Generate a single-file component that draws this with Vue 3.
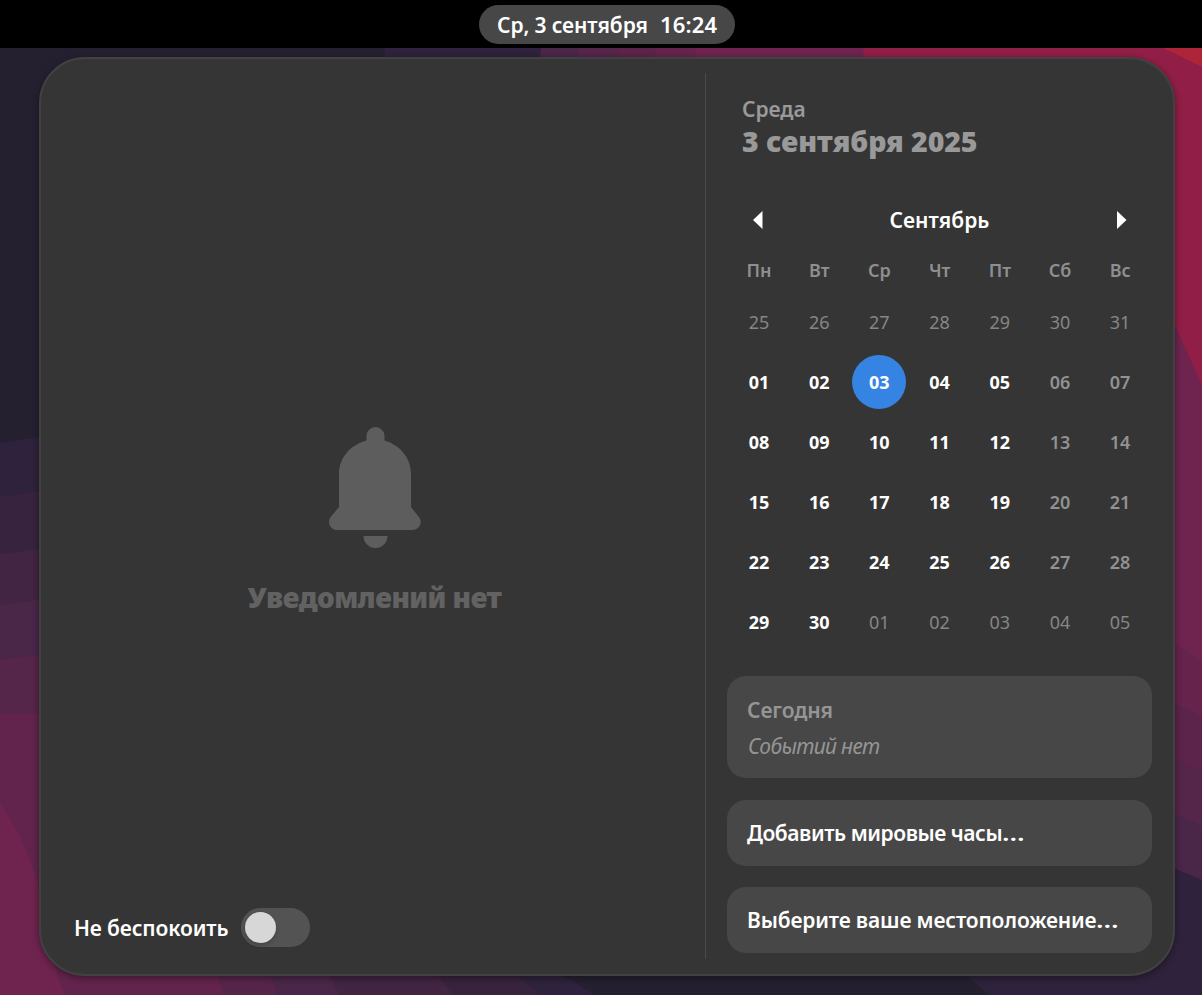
<script setup>
const weekdays = ['Пн', 'Вт', 'Ср', 'Чт', 'Пт', 'Сб', 'Вс']
const pad = (n) => String(n).padStart(2, '0')
const days = Array.from({ length: 42 }, (_, i) => {
  const n = i - 6
  const other = n < 1 || n > 30
  return {
    id: i,
    label: pad(n < 1 ? n + 31 : n > 30 ? n - 30 : n),
    other,
    weekend: !other && i % 7 > 4,
    today: n === 3,
  }
})
</script>

<template>
  <div class="desktop">
    <svg class="wallpaper" viewBox="0 0 1202 995" aria-hidden="true">
      <rect width="1202" height="995" fill="#252030" />
      <path d="M385 48H1202V995H989L966 975L384 57Z" fill="#2f223c" />
      <path d="M0 443L39 437L563 975L595 995H0Z" fill="#2f223c" />
      <path d="M0 497L39 491L517 975L540 995H0Z" fill="#38233e" />
      <path d="M0 554L39 549L437 975L453 995H0Z" fill="#422443" />
      <path d="M0 605L39 600L329 975L339 995H0Z" fill="#4a2649" />
      <path d="M0 660L39 655L270 975L278 995H0Z" fill="#55254a" />
      <path d="M0 714H39L217 975L224 995H0Z" fill="#62244c" />
      <path d="M0 804Q24 835 39 888L57 975L65 995H0Z" fill="#6e244e" />
      <path d="M541 48H1202V880L1174 868L600 500L540 57Z" fill="#4a2649" />
      <path d="M579 48H1202V826L1174 813L620 400L578 57Z" fill="#55254a" />
      <path d="M618 48H1202V772L1174 759L640 300L617 57Z" fill="#5c244a" />
      <path d="M657 48H1202V716L1174 703L660 200L655 57Z" fill="#66234c" />
      <path d="M696 48H1202V661L1174 642L700 100L695 57Z" fill="#6e244e" />
      <path d="M863 48H1202V385L1174 323L864 57Z" fill="#911e46" />
      <path d="M1163 48H1202V67Z" fill="#ae2438" />
    </svg>

    <header class="topbar">
      <div class="clock"><span class="clock-date">Ср, 3 сентября</span><span class="clock-time">16:24</span></div>
    </header>

    <main class="popover">
      <section class="notifications">
        <div class="empty">
          <svg class="bell" viewBox="0 0 92 121" width="92" height="121" aria-hidden="true">
            <path d="M37.500 13.500V9a9 9 0 0 1 18 0V13.500C71 18 82 31 82 47V80L89.500 89.500C94.500 95 90.500 103 83.500 103H8.500C1 103-2.500 95 2 89.500L10 80V47C10 31 21 18 37.500 13.500Z" />
            <path d="M34.500 109H58.500a12 12 0 0 1-24 0Z" />
          </svg>
          <p class="empty-text">Уведомлений нет</p>
        </div>
        <div class="dnd">
          <span class="dnd-label">Не беспокоить</span>
          <button class="switch" aria-label="Не беспокоить"><i></i></button>
        </div>
      </section>

      <aside class="side">
        <div class="today-title">
          <div class="weekday">Среда</div>
          <div class="date">3 сентября 2025</div>
        </div>
        <div class="month">
          <svg width="10" height="18" viewBox="0 0 10 18"><path d="M9.500 0V18L0 9Z" /></svg>
          <span class="month-name">Сентябрь</span>
          <svg width="10" height="18" viewBox="0 0 10 18"><path d="M0 0V18L9.500 9Z" /></svg>
        </div>
        <div class="grid names">
          <span v-for="w in weekdays" :key="w">{{ w }}</span>
        </div>
        <div class="grid days">
          <span v-for="d in days" :key="d.id" :class="{ other: d.other, weekend: d.weekend, today: d.today }">{{ d.label }}</span>
        </div>
        <div class="card events">
          <div class="events-title">Сегодня</div>
          <div class="events-none">Событий нет</div>
        </div>
        <div class="card clocks"><span>Добавить мировые часы<span class="dots">…</span></span></div>
        <div class="card weather"><span>Выберите ваше местоположение<span class="dots">…</span></span></div>
      </aside>
    </main>
  </div>
</template>

<style>
body { margin: 0; overflow: hidden; background: #252030; }
</style>

<style scoped>
.desktop {
  position: relative;
  width: 1202px;
  height: 995px;
  overflow: hidden;
  color: #fff;
  font: 600 21px/30px "Noto Sans", "Open Sans", sans-serif;
  white-space: nowrap;
}
.wallpaper { position: absolute; inset: 0; width: 1202px; height: 995px; }
.topbar {
  position: relative;
  box-sizing: border-box;
  height: 48px;
  padding: 5px 0 0 479px;
  background: #000;
}
.clock {
  box-sizing: border-box;
  display: flex;
  align-items: baseline;
  gap: 12px;
  width: 256px;
  height: 39px;
  padding: 4px 0 0 18px;
  border-radius: 20px;
  background: #474747;
}
.clock-date { width: 151px; letter-spacing: -.12px; }
.clock-time { font-size: 22px; letter-spacing: .2px; }
.popover {
  position: relative;
  box-sizing: border-box;
  display: flex;
  width: 1135.500px;
  height: 919px;
  margin: 9px 0 0 39px;
  border: 2px solid #414141;
  border-radius: 46px;
  background: #353535;
  box-shadow: 0 2px 7px rgba(0, 0, 0, .4);
}
.notifications {
  box-sizing: border-box;
  display: flex;
  flex-direction: column;
  width: 665px;
  height: 886px;
  margin-top: 14px;
  border-right: 1px solid #4a4a4a;
}
.empty { display: flex; flex-direction: column; align-items: center; padding: 354px 0 0 3px; }
.bell { fill: #5d5d5d; }
.empty-text { margin: 29px 0 0; color: #626262; font-weight: 900; font-size: 28px; line-height: 40px; letter-spacing: -.6px; }
.dnd { display: flex; align-items: center; gap: 12px; margin: auto 0 12px 33px; }
.dnd-label { width: 155px; letter-spacing: -.12px; }
.switch { width: 69px; height: 39px; padding: 4px; border: 0; border-radius: 20px; background: #535353; }
.switch i { display: block; width: 31px; height: 31px; border-radius: 50%; background: #d7d7d7; box-shadow: 0 2px 4px rgba(0, 0, 0, .2); }
.side { display: flex; flex-direction: column; width: 425px; margin-left: 21px; }
.today-title { height: 87px; padding: 35px 0 0 15px; color: #999; }
.weekday { line-height: 30px; letter-spacing: -.05px; }
.date { margin-top: -1px; font-size: 28.500px; font-weight: 900; line-height: 36px; letter-spacing: -.08px; }
.month { display: flex; align-items: center; justify-content: space-between; height: 36px; margin-top: 21px; padding: 0 26px; }
.month svg { fill: #fff; }
.month svg:last-child { margin-right: -1px; }
.month-name { margin-left: -1px; }
.grid { display: grid; grid-template-columns: repeat(7, 60.2px); padding-left: 2px; text-align: center; font-size: 18px; }
.names { height: 30px; margin-top: 17px; color: #8f8f8f; }
.days { grid-auto-rows: 60.2px; margin-top: 7px; }
.days span { box-sizing: border-box; display: grid; place-items: center; width: 54px; height: 54px; margin: 3px; padding-bottom: 1px; font-weight: 700; border-radius: 50%; }
.days .other { color: #868686; font-weight: 400; }
.days .weekend { color: #929292; font-weight: 600; }
.days .today { background: #3584e4; }
.card { box-sizing: border-box; display: flex; flex-direction: column; justify-content: center; width: 425px; padding: 1px 0 0 20px; border-radius: 19px; background: #474747; }
.events { height: 102px; margin-top: 23px; color: #959595; }
.events-title { letter-spacing: -.1px; }
.events-none { margin-top: 6px; padding-left: 1px; font-weight: 400; font-style: italic; letter-spacing: -.65px; }
.clocks, .weather { height: 66px; margin-top: 21.500px; }
.clocks { letter-spacing: -.44px; }
.weather { padding-top: 0; letter-spacing: -.16px; }
.dots { letter-spacing: 0; display: inline-block; transform: scaleX(1.3); transform-origin: 0 50%; }
</style>
